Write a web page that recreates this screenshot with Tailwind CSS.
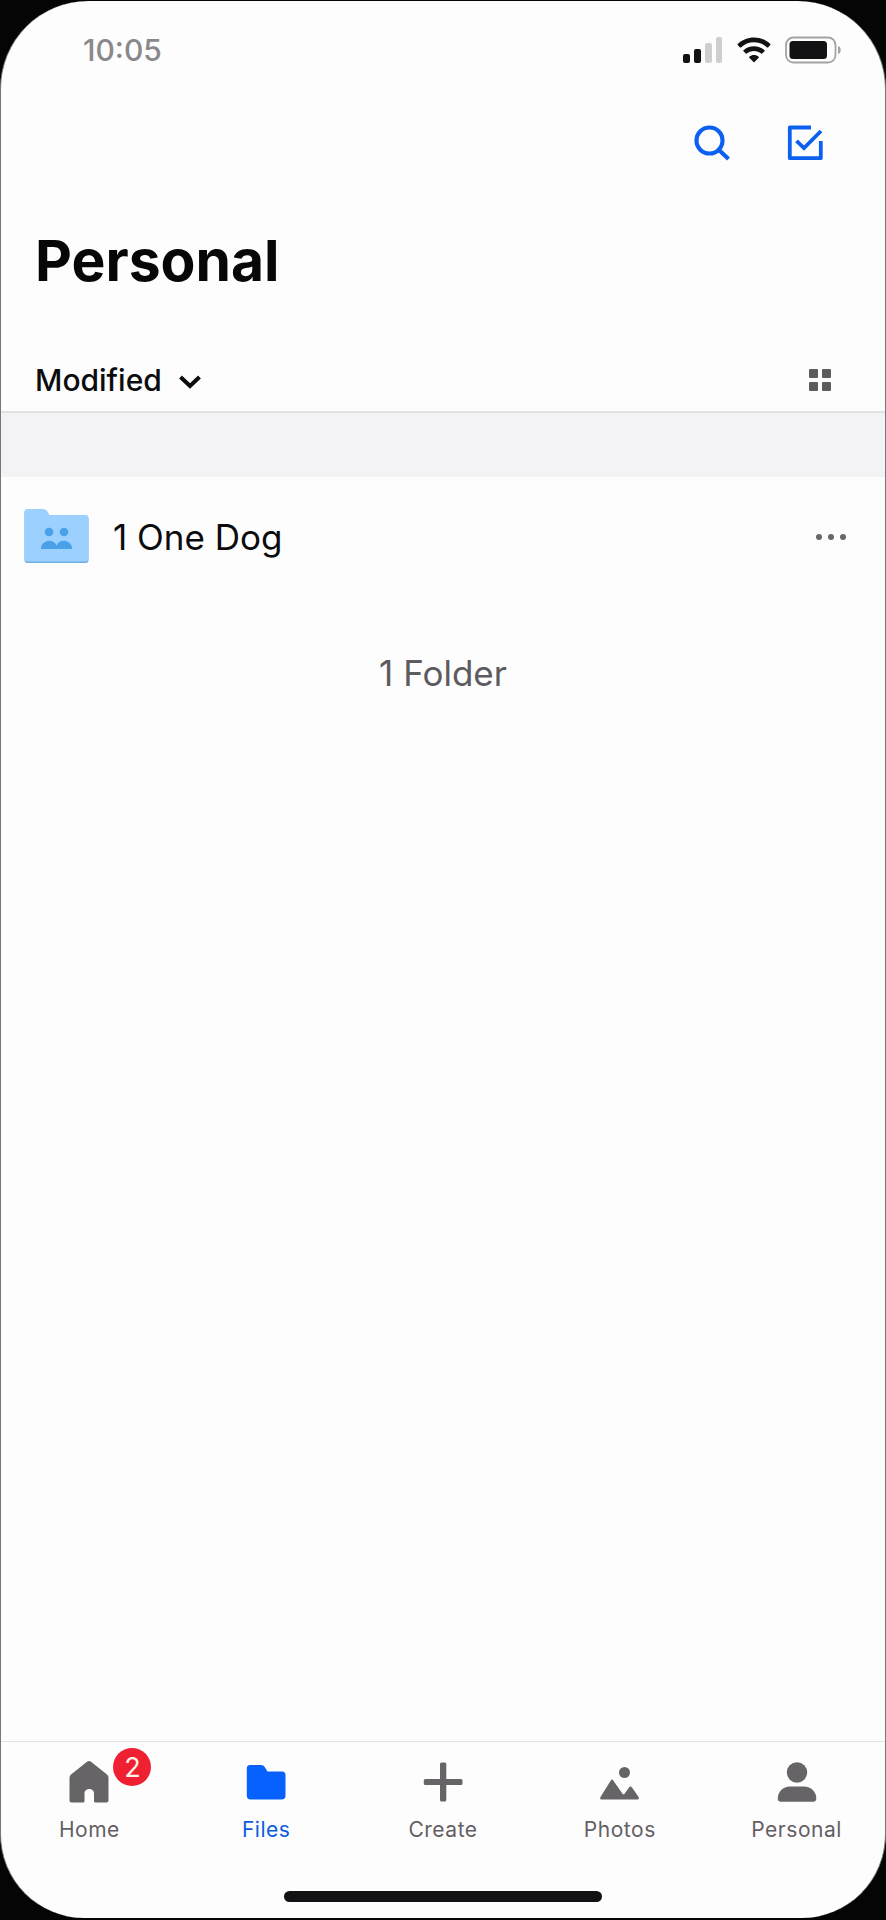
<!DOCTYPE html>
<html lang="en">
<head>
<meta charset="utf-8">
<meta name="viewport" content="width=device-width, initial-scale=1">
<title>Personal</title>
<script src="https://cdn.jsdelivr.net/npm/@tailwindcss/browser@4"></script>
</head>
<body class="bg-[#050506] font-['Inter','Noto_Sans',sans-serif] text-[#0c0c0e]">
<div class="flex min-h-screen flex-col pt-px pb-[2px]">
<div class="flex flex-1 flex-col overflow-hidden rounded-t-[88px] rounded-b-[84px] border-x border-[#777678] bg-[#fefdfe]">

  <!-- Status bar -->
  <div class="flex h-[98px] items-center justify-between pl-[82px] pr-11">
    <time class="text-[30px] leading-9 font-medium text-[#8a888a]">10:05</time>
    <div class="flex items-center gap-[14px]">
      <svg class="h-[26px] w-10" viewBox="0 0 40 26" aria-hidden="true">
        <rect x="0" y="17" width="7" height="9" rx="2" fill="#121113"/>
        <rect x="11" y="12" width="7" height="14" rx="2" fill="#121113"/>
        <rect x="22" y="6" width="7" height="20" rx="2" fill="#cfcecf"/>
        <rect x="33" y="0" width="6" height="26" rx="2" fill="#cfcecf"/>
      </svg>
      <svg class="h-[26px] w-[34px]" viewBox="0 0 34 26" fill="#121113" aria-hidden="true">
        <path d="M17 0.5C23.300 .5 29.100 2.900 33.300 7.100Q33.800 7.600 33.300 8.100L31 10.400Q30.500 10.800 30 10.400C26.500 7 22 5.200 17 5.200S7.500 7 4 10.400Q3.500 10.800 3 10.400L.7 8.100Q.2 7.600 .7 7.100C4.900 2.900 10.700 .5 17 .5Z"/>
        <path d="M17 9.300C21 9.300 24.700 10.800 27.500 13.300Q28 13.800 27.500 14.300L25.200 16.600Q24.700 17 24.200 16.600C22.200 14.900 19.700 14 17 14S11.800 14.900 9.800 16.600Q9.300 17 8.800 16.600L6.500 14.300Q6 13.800 6.500 13.300C9.300 10.800 13 9.300 17 9.300Z"/>
        <path d="M17 18C18.800 18 20.400 18.600 21.700 19.700Q22.200 20.200 21.700 20.700L17.500 25Q17 25.400 16.500 25L12.300 20.700Q11.800 20.200 12.300 19.700C13.600 18.600 15.200 18 17 18Z"/>
      </svg>
      <svg class="h-7 w-14" viewBox="0 0 56 28" aria-hidden="true">
        <rect x="1" y="1.500" width="49.500" height="25" rx="7.500" fill="none" stroke="#a3a2a3" stroke-width="1.800"/>
        <rect x="4.500" y="5" width="37.500" height="18" rx="3.500" fill="#121113"/>
        <path d="M53 10C56.600 11 56.600 17 53 18Z" fill="#a3a2a3"/>
      </svg>
    </div>
  </div>

  <!-- Header -->
  <header>
    <div class="flex h-[88px] items-center justify-end gap-[54px] pr-[60px]">
      <button type="button" aria-label="Search">
        <svg class="size-10" viewBox="0 0 40 40" fill="none" stroke="#0b60f0" stroke-width="4.200">
          <circle cx="18.500" cy="17.500" r="13"/><path d="M28 27L37.500 36"/>
        </svg>
      </button>
      <button type="button" aria-label="Select">
        <svg class="size-10" viewBox="0 0 40 40" fill="none" stroke="#0b60f0" stroke-width="3.800" stroke-linejoin="round">
          <path d="M26 4.500H4.800V35.200H35.800V18"/><path d="M11.500 17.800L19 25L36 8" stroke-linejoin="miter"/>
        </svg>
      </button>
    </div>
    <h1 class="mt-9 pl-[34px] text-[57px] leading-[76px] font-bold text-[#080708]">Personal</h1>
    <div class="mt-[50px] flex h-[62px] items-center justify-between pl-[34px] pr-[53px]">
      <button type="button" class="flex items-center gap-4 text-[30px] leading-10 font-medium">
        Modified
        <svg class="mt-1 h-4 w-6" viewBox="0 0 24 16" fill="none" stroke="currentColor" stroke-width="4"><path d="M2.500 3L12 12L21.500 3"/></svg>
      </button>
      <button type="button" aria-label="Grid view">
        <svg class="size-6" viewBox="0 0 24 24" fill="#5c5b5e"><rect x="1" y="1" width="9" height="9" rx="1"/><rect x="14" y="1" width="9" height="9" rx="1"/><rect x="1" y="14" width="9" height="9" rx="1"/><rect x="14" y="14" width="9" height="9" rx="1"/></svg>
      </button>
    </div>
  </header>
  <div class="h-[66px] border-t-2 border-[#e2e1e3] bg-[#f3f2f4]"></div>

  <!-- File list -->
  <main class="flex-1">
    <div class="flex h-[120px] items-center justify-between pl-[23px] pr-[38px]">
      <a href="#" class="flex items-center gap-6 text-[35px] leading-[44px]">
        <svg class="h-14 w-[65px]" viewBox="0 0 65 56" aria-hidden="true">
          <path d="M3.500 1H19Q22 1 23.500 3.500L25.500 7H61.500Q64.500 7 64.500 10V51Q64.500 54 61.500 54H3.500Q.5 54 .5 51V4Q.5 1 3.500 1Z" fill="#71aee0"/>
          <path d="M3.500 0H19Q22 0 23.500 2.500L25.500 6H61.500Q64.500 6 64.500 9V49.500Q64.500 52.500 61.500 52.500H3.500Q.5 52.500 .5 49.500V3Q.5 0 3.500 0Z" fill="#9bd0ff"/>
          <g fill="#4aa1e8"><circle cx="25" cy="23" r="4.300"/><circle cx="40" cy="23" r="4.300"/><path d="M17 40V38.500C19 30 30 30 32.500 36.500C35 30 46 30 48 38.500V40Z"/></g>
        </svg>
        1 One Dog
      </a>
      <button type="button" aria-label="More options">
        <svg class="h-10 w-8" viewBox="0 0 32 40" fill="#69676a"><circle cx="4" cy="20" r="3"/><circle cx="16" cy="20" r="3"/><circle cx="28" cy="20" r="3"/></svg>
      </button>
    </div>
    <p class="mt-[54px] text-center text-[35px] leading-[44px] text-[#5c5b5e]">1 Folder</p>
  </main>

  <!-- Tab bar -->
  <nav class="border-t border-[#e3e2e5]">
    <div class="grid grid-cols-5 pt-[18px] text-[21px] leading-7 tracking-wide text-[#626064]">
      <a href="#" class="flex flex-col items-center gap-3">
        <span class="relative">
          <svg class="h-11 w-10" viewBox="0 0 40 44" fill="#666467"><path d="M18 1.700Q20 .3 22 1.700L38 14.500Q39.500 15.800 39.500 17.500V40.500Q39.500 42.500 37.500 42.500H26.500Q25 42.500 25 41V33.500C25 27.500 15.500 27.500 15.500 33.500V41Q15.500 42.500 14 42.500H2.500Q.5 42.500 .5 40.500V17.500Q.5 15.800 2 14.500Z"/></svg>
          <span class="absolute -top-3 left-11 flex size-[38px] items-center justify-center rounded-full bg-[#ee2031] text-[27px] leading-none tracking-normal text-[#fff0e8]">2</span>
        </span>
        Home
      </a>
      <a href="#" aria-current="page" class="flex flex-col items-center gap-3 text-[#0b5ce0]">
        <svg class="h-11 w-10" viewBox="0 0 40 44" fill="#0761fe"><path d="M4 5H15Q17.500 5 18.700 7L21.500 11.500H36Q39.500 11.500 39.500 15V35.500Q39.500 39.500 35.500 39.500H4.500Q.8 39.500 .8 35.500V8.500Q.8 5 4 5Z"/></svg>
        Files
      </a>
      <a href="#" class="flex flex-col items-center gap-3">
        <svg class="h-11 w-10" viewBox="0 0 40 44" fill="#666467"><rect x="17" y="2.500" width="6.300" height="39" rx="1.500"/><rect x=".8" y="19" width="38.700" height="6" rx="1.500"/></svg>
        Create
      </a>
      <a href="#" class="flex flex-col items-center gap-3">
        <svg class="h-11 w-10" viewBox="0 0 40 44" fill="#666467"><circle cx="24.500" cy="12.500" r="5.500"/><path d="M10.800 20.500Q12 18.700 13.300 20.500L22.500 33.700Q23.500 34.700 24.500 33.700L29 27.500Q30.500 25.500 32 27.500L38.600 37Q39.500 39.500 37.500 39.500H1.500Q-.5 39.500 .5 37Z"/></svg>
        Photos
      </a>
      <a href="#" class="flex flex-col items-center gap-3">
        <svg class="h-11 w-10" viewBox="0 0 40 44" fill="#666467"><circle cx="20" cy="12.500" r="10.200"/><path d="M13 26.500H27C34 26.500 39.300 31.500 39.300 38.500Q39.300 41.700 36 41.700H4Q.8 41.700 .8 38.500C.8 31.500 6 26.500 13 26.500Z"/></svg>
        Personal
      </a>
    </div>
    <div class="mx-auto mt-[47px] mb-4 h-[11px] w-[36%] rounded-full bg-[#121113]"></div>
  </nav>
</div>
</div>
</body>
</html>
